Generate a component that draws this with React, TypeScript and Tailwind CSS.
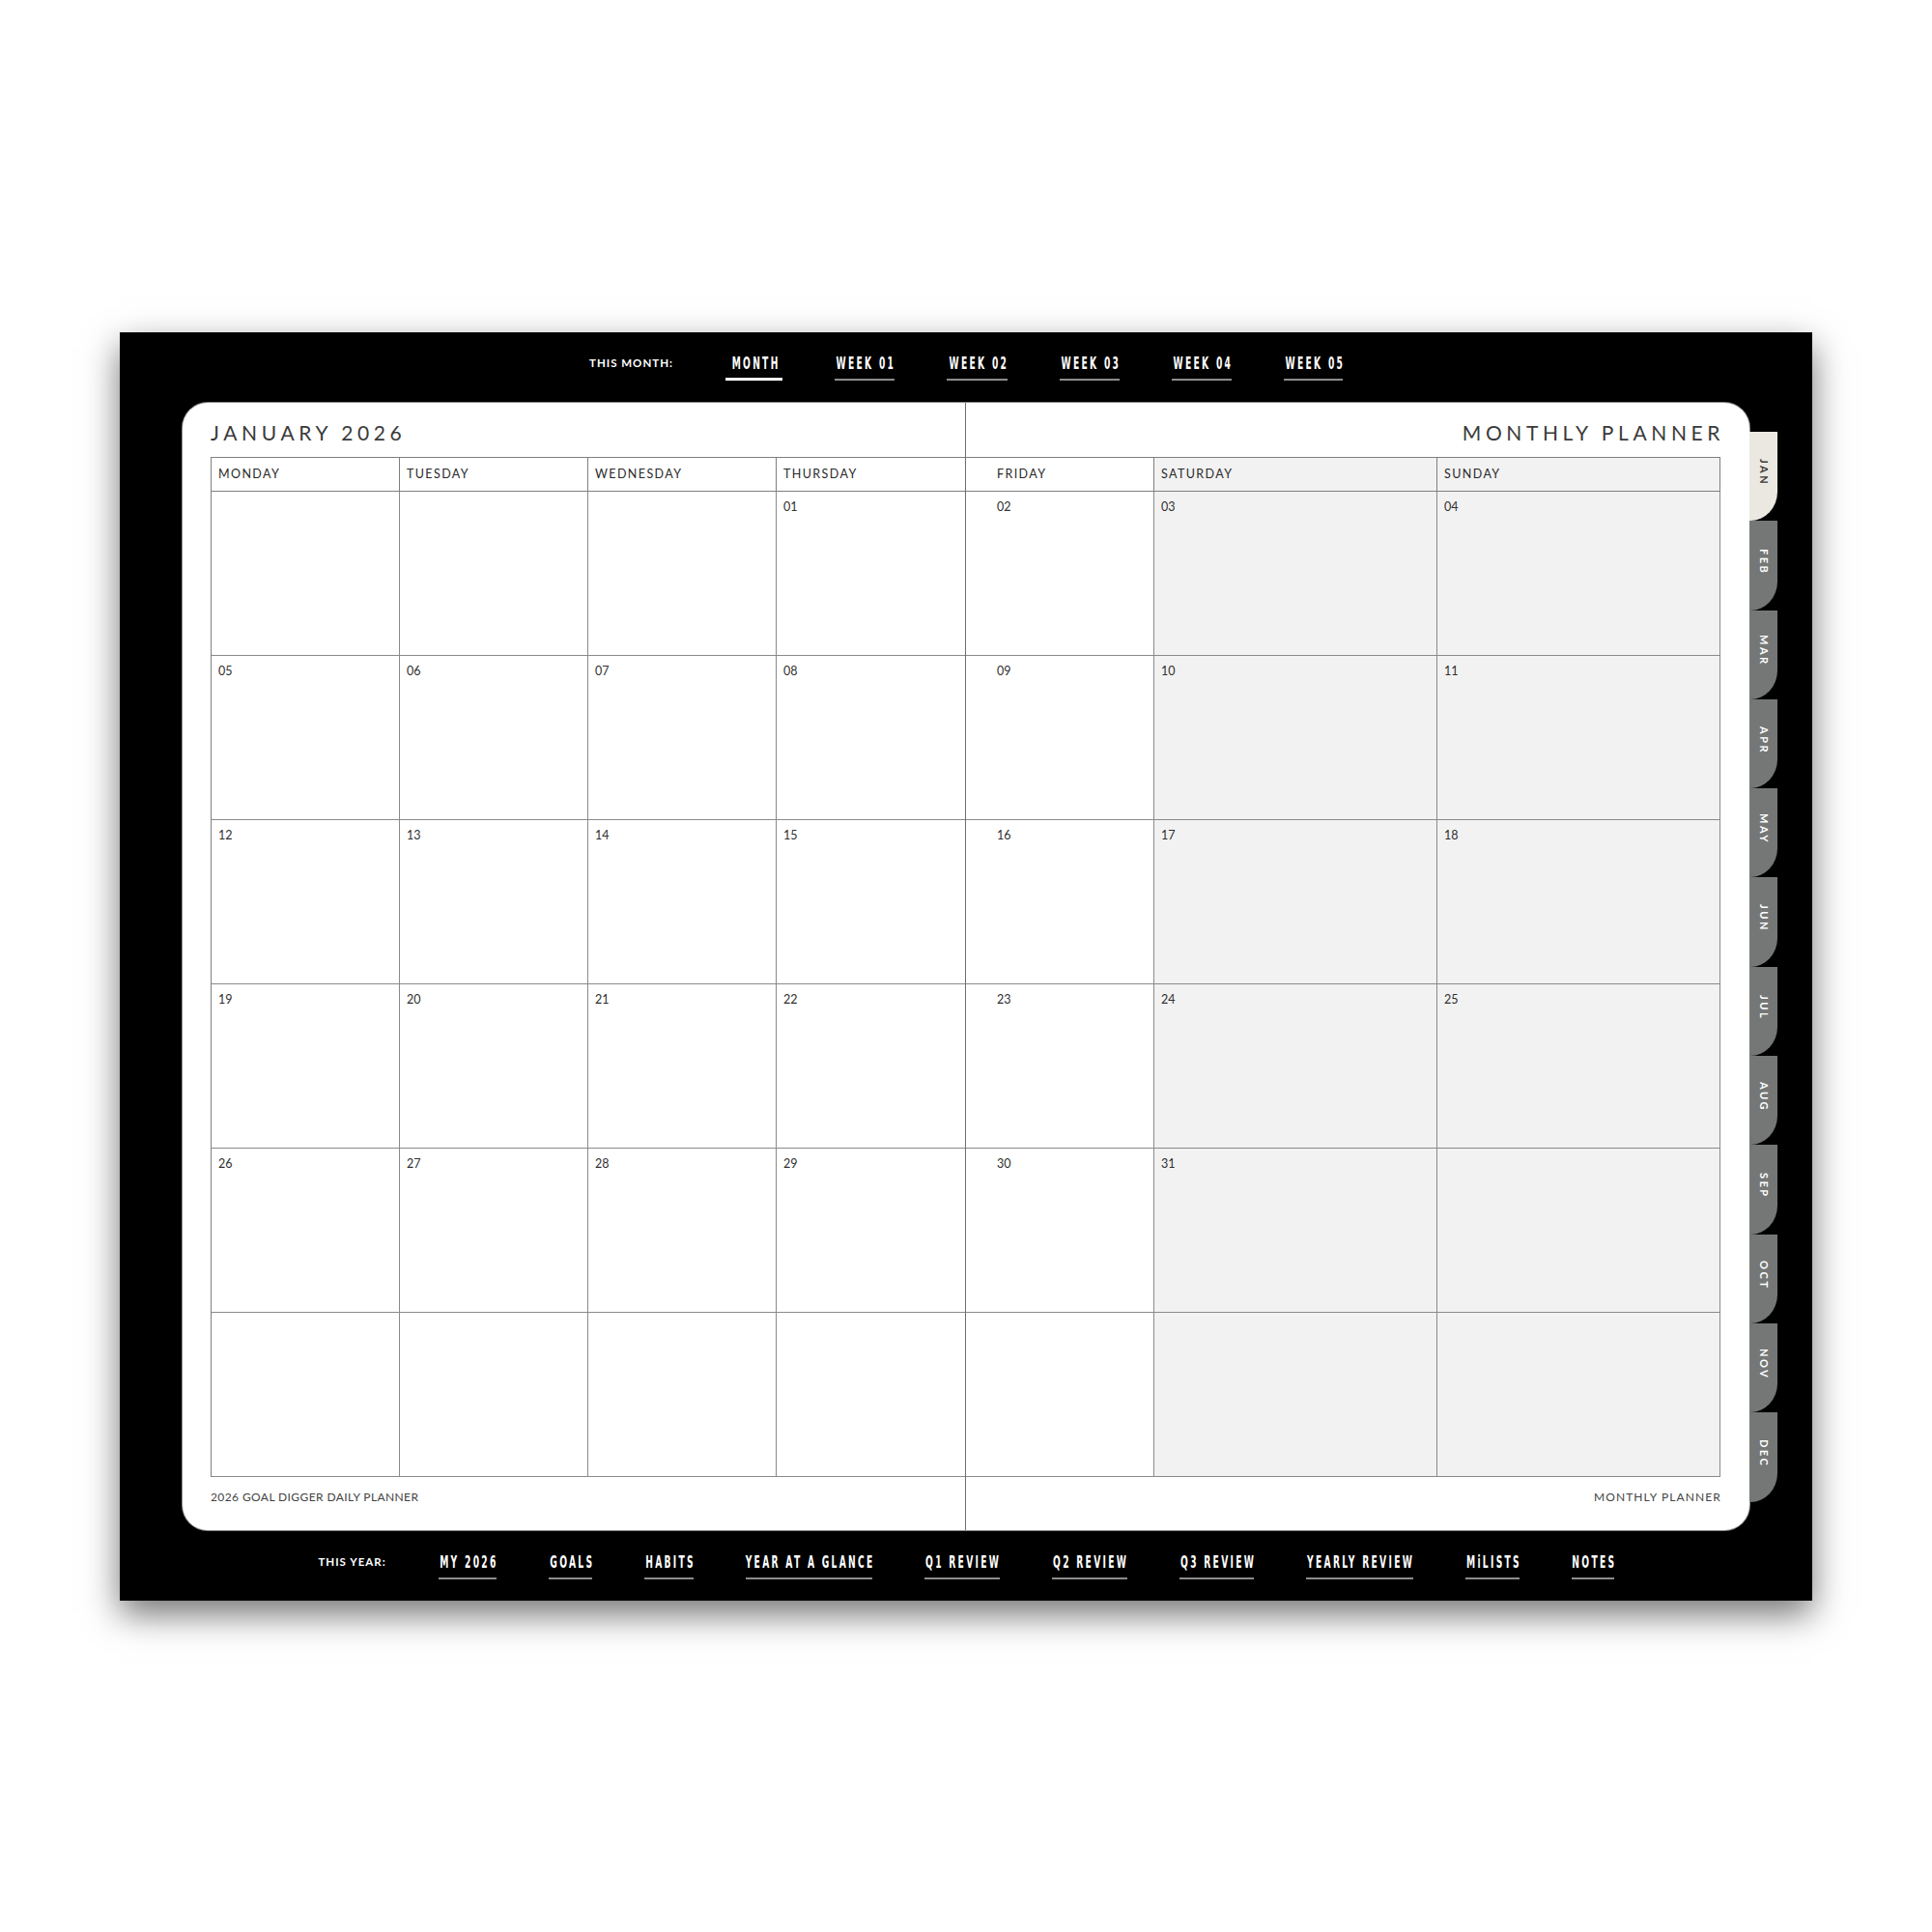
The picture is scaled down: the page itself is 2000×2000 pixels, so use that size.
import React from "react";

const topItems: [string, number][] = [
  ["MONTH", 59],
  ["WEEK 01", 62],
  ["WEEK 02", 63],
  ["WEEK 03", 62],
  ["WEEK 04", 62],
  ["WEEK 05", 61],
];
const bottomItems: [string, number][] = [
  ["MY 2026", 60],
  ["GOALS", 45],
  ["HABITS", 51],
  ["YEAR AT A GLANCE", 131],
  ["Q1 REVIEW", 78],
  ["Q2 REVIEW", 78],
  ["Q3 REVIEW", 77],
  ["YEARLY REVIEW", 111],
  ["MiLISTS", 56],
  ["NOTES", 44],
];
const months = ["JAN", "FEB", "MAR", "APR", "MAY", "JUN", "JUL", "AUG", "SEP", "OCT", "NOV", "DEC"];

const leftRows = [
  ["", "", "", "01"],
  ["05", "06", "07", "08"],
  ["12", "13", "14", "15"],
  ["19", "20", "21", "22"],
  ["26", "27", "28", "29"],
  ["", "", "", ""],
];
const rightRows = [
  ["02", "03", "04"],
  ["09", "10", "11"],
  ["16", "17", "18"],
  ["23", "24", "25"],
  ["30", "31", ""],
  ["", "", ""],
];

function NavItem({ label, width, active }: { label: string; width: number; active?: boolean }) {
  return (
    <div className="flex flex-col items-center" style={{ width }}>
      <div className="w-full flex justify-center">
        <span className="shrink-0 whitespace-nowrap inline-block scale-x-[0.6] text-white text-[17px] leading-[16px] font-bold tracking-[3.8px] mr-[-3.8px] font-['DejaVu_Sans_Condensed','DejaVu_Sans',sans-serif]">
          {label}
        </span>
      </div>
      <span className={active ? "mt-[7px] w-full h-[3px] bg-white" : "mt-[8px] w-full h-[1.5px] bg-[#8c8c8c]"} />
    </div>
  );
}

function NavLabel({ text }: { text: string }) {
  return (
    <span className="text-white text-[11.5px] leading-[16px] font-bold tracking-[1px] font-['Lato',sans-serif]">
      {text}
    </span>
  );
}

function TopNav() {
  return (
    <div className="h-[73px] flex justify-center items-start pt-[24px] gap-[54px]">
      <NavLabel text="THIS MONTH:" />
      {topItems.map(([t, w], i) => (
        <NavItem key={t} label={t} width={w} active={i === 0} />
      ))}
    </div>
  );
}

function BottomNav() {
  return (
    <div className="h-[73px] flex justify-center items-start pt-[25px] gap-[54px]">
      <NavLabel text="THIS YEAR:" />
      {bottomItems.map(([t, w]) => (
        <NavItem key={t} label={t} width={w} />
      ))}
    </div>
  );
}

function LeftHalf() {
  const heads = ["MONDAY", "TUESDAY", "WEDNESDAY", "THURSDAY"];
  return (
    <div className="w-[811px] h-full border-r border-[#6e6e6e] pl-[29px] flex flex-col">
      <div className="h-[56px] pt-[20px] text-[21px] leading-[21px] tracking-[4.6px] text-[#3a3a3a] font-['Lato',sans-serif]">
        JANUARY 2026
      </div>
      <div className="w-[781px] grid grid-cols-4 border-t border-l border-[#7f7f7f]">
        {heads.map((h, i) => (
          <div
            key={h}
            className={
              i < 3
                ? "h-[35px] border-b border-r border-[#7f7f7f] flex items-center pl-[7px] text-[12.5px] tracking-[1.4px] text-[#2a2a2a]"
                : "h-[35px] border-b border-[#7f7f7f] flex items-center pl-[7px] text-[12.5px] tracking-[1.4px] text-[#2a2a2a]"
            }
          >
            {h}
          </div>
        ))}
        {leftRows.map((row, r) =>
          row.map((d, i) => (
            <div
              key={r + "-" + i}
              className={
                i < 3
                  ? "h-[170px] border-b border-r border-[#8a8a8a] pl-[7px] pt-[10px] text-[12.5px] leading-[12px] text-[#2f2f2f]"
                  : "h-[170px] border-b border-[#8a8a8a] pl-[7px] pt-[10px] text-[12.5px] leading-[12px] text-[#2f2f2f]"
              }
            >
              {d}
            </div>
          ))
        )}
      </div>
      <div className="pt-[15px] text-[12px] leading-[12px] tracking-[0.4px] text-[#444]">
        2026 GOAL DIGGER DAILY PLANNER
      </div>
    </div>
  );
}

function RightHalf() {
  const heads = ["FRIDAY", "SATURDAY", "SUNDAY"];
  return (
    <div className="w-[811px] h-full pr-[30px] flex flex-col items-end">
      <div className="h-[56px] pt-[20px] text-[21px] leading-[21px] tracking-[4.6px] mr-[-4px] text-[#3a3a3a] font-['Lato',sans-serif]">
        MONTHLY PLANNER
      </div>
      <div className="w-[781px] grid grid-cols-[195px_293px_293px] border-t border-[#7f7f7f]">
        {heads.map((h, i) => (
          <div
            key={h}
            className={
              i === 0
                ? "h-[35px] border-b border-r border-[#7f7f7f] flex items-center pl-[32px] text-[12.5px] tracking-[1.4px] text-[#2a2a2a]"
                : "h-[35px] border-b border-r border-[#7f7f7f] bg-[#f2f2f2] flex items-center pl-[7px] text-[12.5px] tracking-[1.4px] text-[#2a2a2a]"
            }
          >
            {h}
          </div>
        ))}
        {rightRows.map((row, r) =>
          row.map((d, i) => (
            <div
              key={r + "-" + i}
              className={
                i === 0
                  ? "h-[170px] border-b border-r border-[#8a8a8a] pl-[32px] pt-[10px] text-[12.5px] leading-[12px] text-[#2f2f2f]"
                  : "h-[170px] border-b border-r border-[#8a8a8a] bg-[#f2f2f2] pl-[7px] pt-[10px] text-[12.5px] leading-[12px] text-[#2f2f2f]"
              }
            >
              {d}
            </div>
          ))
        )}
      </div>
      <div className="pt-[15px] mr-[-1px] text-[12px] leading-[12px] tracking-[1.1px] text-[#444]">
        MONTHLY PLANNER
      </div>
    </div>
  );
}

function Tabs() {
  return (
    <div className="w-[29px] pt-[30px] flex flex-col">
      {months.map((m, i) => (
        <div
          key={m}
          className={
            i === 0
              ? "h-[92.3px] bg-[#ebe8e1] rounded-br-[28px_30px] flex justify-center items-center pb-[8px]"
              : "h-[92.3px] bg-[#757777] rounded-br-[28px_30px] flex justify-center items-center pb-[8px]"
          }
        >
          <span
            className={
              i === 0
                ? "[writing-mode:vertical-rl] text-[11px] font-bold tracking-[2.5px] text-[#3a3a3a] font-['Lato',sans-serif]"
                : "[writing-mode:vertical-rl] text-[11px] font-bold tracking-[2.5px] text-white font-['Lato',sans-serif]"
            }
          >
            {m}
          </span>
        </div>
      ))}
    </div>
  );
}

export default function App() {
  return (
    <div className="w-[2000px] h-[2000px] bg-white pt-[344px] pl-[124px] font-['Lato',sans-serif]">
      <div className="w-[1752px] h-[1313px] bg-black shadow-[0_14px_34px_rgba(0,0,0,0.55)] flex flex-col">
        <TopNav />
        <div className="flex pl-[65px] h-[1167px]">
          <div className="w-[1622px] h-[1167px] bg-white rounded-[26px] ring-1 ring-[#8a8a8a] flex overflow-hidden">
            <LeftHalf />
            <RightHalf />
          </div>
          <Tabs />
        </div>
        <BottomNav />
      </div>
    </div>
  );
}
